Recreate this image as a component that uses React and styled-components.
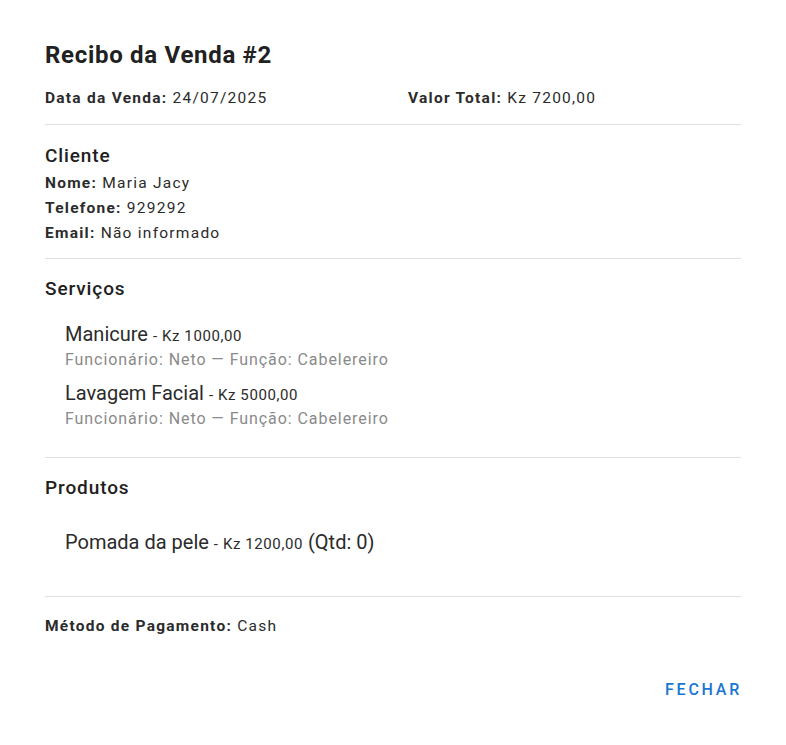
import React from "react";
import styled, { createGlobalStyle } from "styled-components";

const GlobalStyle = createGlobalStyle`
  html, body {
    margin: 0;
    padding: 0;
    background: #ffffff;
    font-family: Roboto, "Liberation Sans", sans-serif;
    color: rgba(0, 0, 0, 0.87);
  }
`;

const venda = {
  id: 2,
  data: "24/07/2025",
  total: "Kz 7200,00",
  cliente: { nome: "Maria Jacy", telefone: "929292", email: "Não informado" },
  servicos: [
    { nome: "Manicure", preco: "Kz 1000,00", funcionario: "Neto", funcao: "Cabelereiro" },
    { nome: "Lavagem Facial", preco: "Kz 5000,00", funcionario: "Neto", funcao: "Cabelereiro" },
  ],
  produtos: [{ nome: "Pomada da pele", preco: "Kz 1200,00", qtd: 0 }],
  pagamento: "Cash",
};

const App = () => {
  return (
    <>
      <GlobalStyle />
      <Dialog>
        <Content>
          <Title>Recibo da Venda #{venda.id}</Title>
          <SummaryRow>
            <Field>
              <b>Data da Venda:</b> {venda.data}
            </Field>
            <Field>
              <b>Valor Total:</b> {venda.total}
            </Field>
          </SummaryRow>
          <Divider $top={13} $bottom={19} />

          <SectionTitle>Cliente</SectionTitle>
          <FieldList>
            <Field>
              <b>Nome:</b> {venda.cliente.nome}
            </Field>
            <Field>
              <b>Telefone:</b> {venda.cliente.telefone}
            </Field>
            <Field>
              <b>Email:</b> {venda.cliente.email}
            </Field>
          </FieldList>
          <Divider $top={12} $bottom={18} />

          <SectionTitle>Serviços</SectionTitle>
          <ItemList $pad={21}>
            {venda.servicos.map((s) => (
              <Item key={s.nome}>
                <ItemName>
                  {s.nome} <Price>- {s.preco}</Price>
                </ItemName>
                <ItemMeta>
                  Funcionário: {s.funcionario} — Função: {s.funcao}
                </ItemMeta>
              </Item>
            ))}
          </ItemList>
          <Divider $top={26} $bottom={18} />

          <SectionTitle>Produtos</SectionTitle>
          <ItemList $pad={30}>
            {venda.produtos.map((p) => (
              <Item key={p.nome}>
                <ItemName>
                  {p.nome} <Price>- {p.preco}</Price> (Qtd: {p.qtd})
                </ItemName>
              </Item>
            ))}
          </ItemList>
          <Divider $top={40} $bottom={17} />

          <Field>
            <b>Método de Pagamento:</b> {venda.pagamento}
          </Field>
        </Content>
        <Actions>
          <TextButton>Fechar</TextButton>
        </Actions>
      </Dialog>
    </>
  );
};

export default App;

const Dialog = styled.div`
  width: 786px;
  min-height: 745px;
  box-sizing: border-box;
  display: flex;
  flex-direction: column;
`;

const Content = styled.div`
  padding: 40px 45px 0 45px;
  display: flex;
  flex-direction: column;
`;

const Title = styled.h2`
  margin: 0 0 16px;
  font-size: 24px;
  font-weight: 700;
  line-height: 30px;
  letter-spacing: 0.7px;
  color: #212121;
`;

const SummaryRow = styled.div`
  display: grid;
  grid-template-columns: 363px 1fr;
`;

const Field = styled.div`
  font-size: 15.5px;
  line-height: 25px;
  letter-spacing: 1.25px;
  color: #2b2b2b;

  b {
    font-weight: 700;
  }
`;

const FieldList = styled.div`
  display: flex;
  flex-direction: column;
  margin-top: 3px;
`;

const Divider = styled.hr`
  border: none;
  border-top: 1px solid #e0e0e0;
  margin: ${({ $top }) => $top}px 0 ${({ $bottom }) => $bottom}px;
  width: 100%;
`;

const SectionTitle = styled.h3`
  margin: 0;
  font-size: 19px;
  font-weight: 500;
  line-height: 24px;
  letter-spacing: 0.9px;
  color: #212121;
`;

const ItemList = styled.ul`
  list-style: none;
  margin: 0;
  padding: ${({ $pad }) => $pad}px 20px 0;
  display: flex;
  flex-direction: column;
  gap: 9px;
`;

const Item = styled.li`
  display: flex;
  flex-direction: column;
`;

const ItemName = styled.span`
  font-size: 20px;
  line-height: 24px;
  color: #2b2b2b;
`;

const Price = styled.span`
  font-size: 15px;
  letter-spacing: 0.6px;
`;

const ItemMeta = styled.span`
  font-size: 16px;
  line-height: 24px;
  color: #8a8a8a;
  letter-spacing: 0.93px;
`;

const Actions = styled.div`
  display: flex;
  justify-content: flex-end;
  padding: 33px 38px 0;
`;

const TextButton = styled.button`
  background: none;
  border: none;
  font-family: Roboto, "Liberation Sans", sans-serif;
  font-size: 16px;
  font-weight: 500;
  letter-spacing: 2.75px;
  text-transform: uppercase;
  color: #1976d2;
  padding: 6px 6px 6px 8px;
  line-height: 24px;
  cursor: pointer;
`;
